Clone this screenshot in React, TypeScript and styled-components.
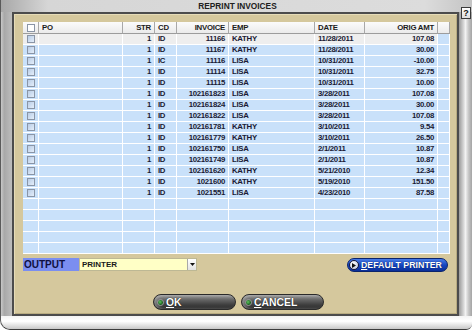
import React from 'react'
import styled, { createGlobalStyle } from 'styled-components'

const GlobalStyle = createGlobalStyle`
  html, body {
    margin: 0;
    padding: 0;
    background: #ffffff;
  }
  body {
    font-family: "Liberation Sans", Arial, sans-serif;
  }
`

const Window = styled.div`
  width: 472px;
  height: 330px;
  box-sizing: border-box;
  display: flex;
  flex-direction: column;
  background: linear-gradient(to right, #8e8e8e 0px, #b4b4b4 4px, #c6c6c6 12px, #d4d4d4 60%, #c8c8c8 100%);
  border-left: 1px solid #5a5a5a;
  border-bottom: 1px solid #3c3c3c;
  border-radius: 0 0 6px 10px;
  overflow: hidden;
`

const TitleBar = styled.div`
  height: 12px;
  flex-shrink: 0;
  display: grid;
  grid-template-columns: 1fr auto 1fr;
  align-items: start;
  background: linear-gradient(to right, #a8a8a8, #d6d6d6 10%, #dcdcdc 90%, #c4c4c4);
`

const Title = styled.div`
  grid-column: 2;
  font-size: 8.3px;
  font-weight: bold;
  color: #202020;
  line-height: 12px;
  padding-left: 2px;
`

const HelpButton = styled.div`
  grid-column: 3;
  justify-self: end;
  position: relative;
  z-index: 1;
  margin-top: 7px;
  margin-right: 1px;
  width: 10px;
  height: 12px;
  box-sizing: border-box;
  border: 1px solid #3a3a3a;
  background: linear-gradient(#ffffff, #dcdcdc);
  font-size: 9px;
  font-weight: bold;
  color: #111;
  line-height: 10px;
  text-align: center;
`

const Body = styled.div`
  flex: 1;
  display: flex;
`

const LeftGutter = styled.div`
  width: 11px;
  background: linear-gradient(to right, #c8c8c8, #a8a8a8 30%, #bdbdbd);
`

const RightGutter = styled.div`
  width: 13px;
  background: linear-gradient(to right, #9a9a9a, #d6d6d6 35%, #f2f2f2 50%, #c4c4c4 75%, #a4a4a4);
`

const Panel = styled.div`
  width: 447px;
  height: 304px;
  box-sizing: border-box;
  border: 2px solid #4c4c4c;
  background: #d5c89d;
  box-shadow: inset 1px 1px 0 #e6dcb8, inset -1px -1px 0 #b8ab80;
  display: flex;
  flex-direction: column;
  padding: 8px 7px 5px 9px;
`

const BottomStrip = styled.div`
  height: 13px;
  background: linear-gradient(to bottom, #f4f4f4, #ffffff 40%, #c8c8c8);
`

const Table = styled.div`
  width: 427px;
  height: 232px;
  background: #ffffff;
  display: flex;
  flex-direction: column;
`

const COLS = '16px 84px 32px 22px 52px 86px 50px 73px 12px'

const justify = (align?: string) =>
  align === 'right' ? 'flex-end' : align === 'center' ? 'center' : 'flex-start'

const HeaderRow = styled.div`
  display: grid;
  grid-template-columns: ${COLS};
  height: 12px;
`

const HeaderCell = styled.div<{ $align?: string }>`
  box-sizing: border-box;
  height: 12px;
  background: linear-gradient(#fbfbfb, #ebebeb);
  border-right: 1px solid #a8a8a8;
  border-bottom: 1px solid #9c9c9c;
  font-size: 7.8px;
  font-weight: bold;
  color: #1c1c1c;
  line-height: 11px;
  padding: 0 3px;
  display: flex;
  align-items: center;
  justify-content: ${(p) => justify(p.$align)};
  letter-spacing: -0.25px;
`

const Row = styled.div`
  display: grid;
  grid-template-columns: ${COLS};
  height: 11px;
`

const Cell = styled.div<{ $align?: string; $light?: boolean }>`
  box-sizing: border-box;
  height: 11px;
  background: ${(p) => (p.$light ? '#eeeeee' : '#c9e1fa')};
  border-right: 1px solid #ffffff;
  border-bottom: 1px solid #ffffff;
  font-size: 7.8px;
  font-weight: bold;
  color: #1a1a34;
  line-height: 10px;
  padding: 0 3px;
  display: flex;
  align-items: center;
  justify-content: ${(p) => justify(p.$align)};
  letter-spacing: -0.3px;
  white-space: nowrap;
`

const Check = styled.div<{ $white?: boolean }>`
  width: 8px;
  height: 8px;
  box-sizing: border-box;
  border: 1px solid #8a95a6;
  background: ${(p) => (p.$white ? '#ffffff' : 'linear-gradient(135deg, #b9cde6, #e4eefa)')};
`

const OutputRow = styled.div`
  margin-top: 4px;
  display: flex;
  justify-content: space-between;
  align-items: flex-start;
  width: 427px;
`

const OutputGroup = styled.div`
  display: flex;
  height: 13px;
`

const OutputLabel = styled.div`
  width: 56px;
  height: 13px;
  box-sizing: border-box;
  background: #7b8ef0;
  font-size: 10px;
  font-weight: bold;
  color: #101040;
  line-height: 13px;
  padding-left: 1px;
`

const Select = styled.div`
  width: 118px;
  height: 13px;
  box-sizing: border-box;
  background: #ffffc6;
  border: 1px solid #bdb894;
  display: flex;
  align-items: center;
  justify-content: space-between;
  font-size: 8px;
  font-weight: bold;
  color: #1a1a1a;
  padding-left: 2px;
`

const DropButton = styled.div`
  width: 9px;
  height: 11px;
  box-sizing: border-box;
  border-left: 1px solid #a8a8a8;
  background: linear-gradient(#ffffff, #e2e2e2);
  display: flex;
  align-items: center;
  justify-content: center;
`

const DefaultPrinter = styled.div`
  margin-right: 2px;
  width: 101px;
  height: 14px;
  box-sizing: border-box;
  border-radius: 7px;
  border: 1px solid #0b246c;
  background: linear-gradient(#4a7ee8, #1646c0 50%, #0a2f98);
  display: flex;
  align-items: center;
  gap: 2px;
  padding-left: 1px;
  font-size: 8.8px;
  font-weight: bold;
  color: #ffffff;
  text-shadow: 0 0 1px #001040;
`

const PlayIcon = styled.div`
  width: 10px;
  height: 10px;
  box-sizing: border-box;
  border-radius: 50%;
  border: 1px solid #1a1a3a;
  background: radial-gradient(circle at 40% 35%, #ffffff, #b8c2d8);
  display: flex;
  align-items: center;
  justify-content: center;
`

const ButtonRow = styled.div`
  margin-top: 22px;
  display: flex;
  justify-content: center;
  gap: 5px;
  padding-left: 4px;
`

const ActionButton = styled.div`
  width: 83px;
  height: 16px;
  box-sizing: border-box;
  border-radius: 8px;
  border: 1px solid #2a2a2a;
  background: linear-gradient(#a4a4a4 0%, #6a6a6a 30%, #3e3e3e 70%, #2c2c2c 100%);
  box-shadow: inset 3px 0 3px rgba(200, 200, 200, 0.45);
  display: flex;
  align-items: center;
  gap: 2px;
  padding-left: 3px;
  font-size: 10.4px;
  font-weight: bold;
  color: #ffffff;
  text-shadow: 0 0 1px #000;
`

const Dot = styled.div`
  width: 7px;
  height: 7px;
  box-sizing: border-box;
  border-radius: 50%;
  border: 1px solid #9a9a9a;
  background: radial-gradient(circle at 40% 40%, #5ec45e, #0b4a12 80%);
`

type Invoice = [string, string, string, string, string, string]

const invoices: Invoice[] = [
  ['1', 'ID', '11166', 'KATHY', '11/28/2011', '107.08'],
  ['1', 'ID', '11167', 'KATHY', '11/28/2011', '30.00'],
  ['1', 'IC', '11116', 'LISA', '10/31/2011', '-10.00'],
  ['1', 'ID', '11114', 'LISA', '10/31/2011', '32.75'],
  ['1', 'ID', '11115', 'LISA', '10/31/2011', '10.00'],
  ['1', 'ID', '102161823', 'LISA', '3/28/2011', '107.08'],
  ['1', 'ID', '102161824', 'LISA', '3/28/2011', '30.00'],
  ['1', 'ID', '102161822', 'LISA', '3/28/2011', '107.08'],
  ['1', 'ID', '102161781', 'KATHY', '3/10/2011', '9.54'],
  ['1', 'ID', '102161779', 'KATHY', '3/10/2011', '26.50'],
  ['1', 'ID', '102161750', 'LISA', '2/1/2011', '10.87'],
  ['1', 'ID', '102161749', 'LISA', '2/1/2011', '10.87'],
  ['1', 'ID', '102161620', 'KATHY', '5/21/2010', '12.34'],
  ['1', 'ID', '1021600', 'KATHY', '5/19/2010', '151.50'],
  ['1', 'ID', '1021551', 'LISA', '4/23/2010', '87.58'],
]

const InvoiceRow = ({ data, light }: { data?: Invoice; light?: boolean }) => (
  <Row>
    <Cell $light={light} $align="center">{data && <Check />}</Cell>
    <Cell $light={light} />
    <Cell $light={light} $align="right">{data?.[0]}</Cell>
    <Cell $light={light}>{data?.[1]}</Cell>
    <Cell $light={light} $align="right">{data?.[2]}</Cell>
    <Cell $light={light}>{data?.[3]}</Cell>
    <Cell $light={light}>{data?.[4]}</Cell>
    <Cell $light={light} $align="right">{data?.[5]}</Cell>
    <Cell />
  </Row>
)

export default function App() {
  return (
    <>
      <GlobalStyle />
      <Window>
        <TitleBar>
          <Title>REPRINT INVOICES</Title>
          <HelpButton>?</HelpButton>
        </TitleBar>
        <Body>
          <LeftGutter />
          <Panel>
            <Table>
              <HeaderRow>
                <HeaderCell $align="center"><Check $white /></HeaderCell>
                <HeaderCell>PO</HeaderCell>
                <HeaderCell $align="right">STR</HeaderCell>
                <HeaderCell>CD</HeaderCell>
                <HeaderCell $align="right">INVOICE</HeaderCell>
                <HeaderCell>EMP</HeaderCell>
                <HeaderCell>DATE</HeaderCell>
                <HeaderCell $align="right">ORIG AMT</HeaderCell>
                <HeaderCell />
              </HeaderRow>
              {invoices.map((inv, i) => (
                <InvoiceRow key={i} data={inv} light={i === 0} />
              ))}
              {[0, 1, 2, 3, 4].map((i) => (
                <InvoiceRow key={'e' + i} />
              ))}
            </Table>
            <OutputRow>
              <OutputGroup>
                <OutputLabel>OUTPUT</OutputLabel>
                <Select>
                  PRINTER
                  <DropButton>
                    <svg width="5" height="3" viewBox="0 0 5 3">
                      <path d="M0 0 L5 0 L2.5 3 Z" fill="#111" />
                    </svg>
                  </DropButton>
                </Select>
              </OutputGroup>
              <DefaultPrinter>
                <PlayIcon>
                  <svg width="4" height="5" viewBox="0 0 4 5">
                    <path d="M0 0 L4 2.5 L0 5 Z" fill="#111" />
                  </svg>
                </PlayIcon>
                <span><u>D</u>EFAULT PRINTER</span>
              </DefaultPrinter>
            </OutputRow>
            <ButtonRow>
              <ActionButton>
                <Dot />
                <span><u>O</u>K</span>
              </ActionButton>
              <ActionButton>
                <Dot />
                <span><u>C</u>ANCEL</span>
              </ActionButton>
            </ButtonRow>
          </Panel>
          <RightGutter />
        </Body>
        <BottomStrip />
      </Window>
    </>
  )
}
